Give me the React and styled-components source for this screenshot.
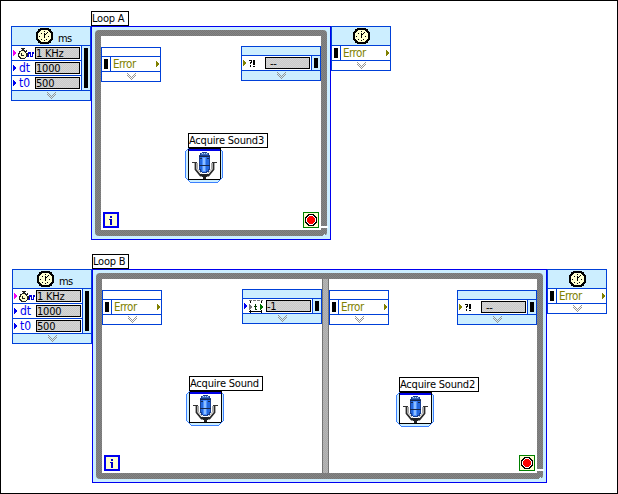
import React from "react";
import styled, { createGlobalStyle } from "styled-components";

const Global = createGlobalStyle`
  * { box-sizing: border-box; }
  body { margin: 0; background: #fff; }
`;

const BLUE = "#0040d8";
const WIRE = "#0000f0";
const PALE = "#cceeff";
const OLIVE = "#808000";

const Diagram = styled.main`
  position: relative;
  width: 618px;
  height: 494px;
  border: 1px solid #000;
  background: #fff;
  overflow: hidden;
  font: 11px/14px "DejaVu Sans Condensed", "DejaVu Sans", sans-serif;
  font-stretch: condensed;
  color: #000;
`;

const Place = styled.div`
  position: absolute;
  left: ${(p) => p.$x}px;
  top: ${(p) => p.$y}px;
`;

const LoopBox = styled.section`
  display: flex;
  width: ${(p) => p.$w}px;
  height: 214px;
  border: 1px solid ${WIRE};
  padding: 3px;
  background: ${PALE};
`;

const LoopFrame = styled.div`
  flex: 1;
  display: flex;
  padding: 6px;
  border-radius: 4px;
  background: repeating-conic-gradient(#777 0 25%, #858585 0 50%) 0 0 / 2px 2px;
`;

const Panel = styled.div`
  position: relative;
  flex: ${(p) => (p.$w ? `0 0 ${p.$w}px` : "1")};
  background: #fff;
`;

const Divider = styled.div`
  width: 7px;
  border: solid #737373;
  border-width: 0 1px;
  background: repeating-conic-gradient(#a9a9a9 0 25%, #b6b6b6 0 50%) 0 0 / 2px 2px;
`;

const Label = styled.div`
  width: ${(p) => p.$w}px;
  height: 15px;
  border: 1px solid #000;
  background: #fff;
  line-height: 13px;
  white-space: nowrap;
  letter-spacing: -0.2px;
`;

const Node = styled.div`
  display: flex;
  flex-direction: column;
  width: ${(p) => p.$w}px;
  border: 1px solid ${BLUE};
  background: ${(p) => (p.$fill ? PALE : "#fff")};
`;

const Header = styled.div`
  position: relative;
  display: flex;
  justify-content: center;
  height: ${(p) => (p.$tall ? 18 : 8)}px;
  padding-top: ${(p) => (p.$tall ? 1 : 0)}px;
  background: ${(p) => (p.$fill ? PALE : "#fff")};
`;

const HeaderIcon = styled.div`
  margin-right: 14px;
`;

const Unit = styled.span`
  position: absolute;
  left: 46px;
  top: 5px;
  letter-spacing: -0.6px;
`;

const Footer = styled.div`
  display: flex;
  justify-content: center;
  height: 9px;
  padding: 1px 0 0 1px;
`;

const Body = styled.div`
  display: flex;
  border: solid ${BLUE};
  border-width: 1px 0;
`;

const Rows = styled.div`
  flex: 1;
  display: flex;
  flex-direction: column;
  gap: 1px;
  background: ${BLUE};
`;

const Row = styled.div`
  display: flex;
  align-items: center;
  justify-content: space-between;
  height: 14px;
  padding: 0 1px;
  background: #fff;
`;

const Name = styled.div`
  flex: 1;
  display: flex;
  align-items: center;
  padding-left: ${(p) => p.$inset || 0}px;
  color: ${(p) => (p.$olive ? OLIVE : WIRE)};
  font-size: ${(p) => (p.$olive ? 11.5 : 12)}px;
  letter-spacing: ${(p) => (p.$olive ? -0.5 : 0)}px;
`;

const Field = styled.div`
  width: 45px;
  height: 12px;
  border: 1px solid #000;
  padding-left: ${(p) => (p.$inset ? 4 : 0)}px;
  line-height: 11px;
  letter-spacing: -0.2px;
  background: repeating-conic-gradient(#cacaca 0 25%, #d6d6d6 0 50%) 0 0 / 2px 2px;
`;

const Terminal = styled.div`
  display: flex;
  width: 9px;
  padding: 2px;
  border: 0 solid ${BLUE};
  border-left-width: ${(p) => (p.$left ? 0 : 1)}px;
  border-right-width: ${(p) => (p.$left ? 1 : 0)}px;
  background: ${(p) => (p.$fill ? PALE : "#fff")};
`;

const Bar = styled.i`
  width: 4px;
  background: #000;
`;

const Svg = styled.svg`
  display: block;
  flex: none;
  shape-rendering: crispEdges;
`;

function Pixels({ rows, colors }) {
  return (
    <Svg width={rows[0].length} height={rows.length}>
      {rows.flatMap((row, y) =>
        [...row].map((c, x) =>
          colors[c] ? <rect key={`${x}-${y}`} x={x} y={y} width="1" height="1" fill={colors[c]} /> : null
        )
      )}
    </Svg>
  );
}

const Chevron = () => (
  <Pixels
    colors={{ x: "#949494" }}
    rows={[
      "x.......x",
      ".x.....x.",
      "x.x...x.x",
      ".x.x.x.x.",
      "..x.x.x..",
      "...x.x...",
      "....x....",
    ]}
  />
);

const Clock = () => (
  <Pixels
    colors={{ x: "#000", o: "#ffffcf" }}
    rows={[
      "....xxxxxxxxx....",
      "..xxxxxxxxxxxxx..",
      "..xxxoooooooxxx..",
      ".xxxooooxooooxxx.",
      "xxxooooooooxooxxx",
      "xxoooxooxoxooooxx",
      "xxooooooxxoooooxx",
      "xxooooooxooooooxx",
      "xxoxooooxoooxooxx",
      "xxooooooxooooooxx",
      "xxoooooooooooooxx",
      "xxxooxooooxoooxxx",
      ".xxxooooxooooxxx.",
      "..xxxoooooooxxx..",
      "..xxxxxxxxxxxxx..",
      "....xxxxxxxxx....",
    ]}
  />
);

const Arrow = ({ color }) => (
  <Svg width="3" height="6">
    <path d="M0 0h1v6H0zM1 1h1v4H1zM2 2h1v2H2z" fill={color} />
  </Svg>
);

const Source = () => (
  <Pixels
    colors={{ x: "#222", o: "#ffffcf", b: "#0000d8" }}
    rows={[
      "...xxxx.........",
      "....xx..........",
      "...xxxx.x.......",
      ".xxoooxxx.......",
      ".xooooox..bbb.bb",
      "xxoxooooxxbbb.bb",
      "xooxooooxxb.b.b.",
      "xooxxxooxxb.b.b.",
      "xxooooooxbb.bbb.",
      ".xxoooox........",
      "..xxxxx.........",
    ]}
  />
);

const Dispatch = () => (
  <Pixels
    colors={{ x: "#000", g: "#777", e: "#007000", t: "#003800" }}
    rows={[
      "ggg.ggg.ggg.gg",
      ".x..........x.",
      ".x..........x.",
      "..............",
      "g.....t....e..",
      "gg....t....ee.",
      "ggg..ttt...eee",
      "ggg...t....eee",
      "gg....t....ee.",
      "g.....tt...e..",
      ".x..........x.",
      "xxxxxxxxxxxxx.",
      ".x..........x.",
    ]}
  />
);

const ErrorMark = () => (
  <Pixels
    colors={{ x: "#000" }}
    rows={[
      "xxx.xx",
      "..x.xx",
      ".xx.xx",
      ".x..xx",
      "....xx",
      ".x....",
      ".x..xx",
    ]}
  />
);

const Glyph = styled.span`
  display: flex;
`;

const Index = styled.div`
  display: flex;
  justify-content: center;
  width: 16px;
  height: 16px;
  border: 2px solid ${WIRE};
  background: #ffffd0;
`;

const Iteration = () => (
  <Index>
    <Svg width="12" height="12">
      <path d="M5 2h2v2H5zM4 5h3v6H5V6H4z" fill="#0000c8" />
    </Svg>
  </Index>
);

const StopBox = styled.div`
  width: 16px;
  height: 16px;
  border: 1px solid #008000;
  background: #ffffd0;
`;

const Stop = () => (
  <StopBox>
    <Svg width="14" height="14">
      <path d="M4 1h6v1h1v1h1v1h1v6h-1v1h-1v1h-1v1H4v-1H3v-1H2v-1H1V4h1V3h1V2h1z" fill="#000" />
      <path d="M5 2h4v1h1v1h1v1h1v4h-1v1h-1v1H9v1H5v-1H4v-1H3V9H2V5h1V4h1V3h1z" fill="#fff" />
      <path d="M5 3h4v1h1v1h1v4h-1v1H9v1H5v-1H4V9H3V5h1V4h1z" fill="#f00" />
    </Svg>
  </StopBox>
);

const Microphone = () => (
  <Svg width="38" height="35" viewBox="0 0 38 35">
    <path d="M3.5.5h31l3 3v26l-5 5h-27l-5-5v-26z" fill={PALE} stroke="#3c80ff" />
    <rect x="3" y="0" width="33" height="32" rx="2" fill="#000" />
    <rect x="4" y="1" width="31" height="30" fill="#fff" />
    <rect x="4" y="1" width="31" height="2" fill="#0000e8" />
    <g shapeRendering="auto">
      <path d="M10.5 14v7.5l5 6h8l5-6V14" fill="none" stroke="#2c2c2c" strokeWidth="1.8" />
      <path d="M12.5 15v6l4 4.5M26.500 15v6l-4 4.5" fill="none" stroke="#a8a8a8" strokeWidth="1" />
    </g>
    <path d="M7 14h5v1H7zM27 14h5v1h-5z" fill="#333" />
    <path d="M15 26h9v2h-2v1h-1v2h-3v-2h-1v-1h-2z" fill="#222" />
    <path d="M17 4h5v1h2v2h1v15h-1v2h-2v1h-5v-1h-2v-2h-1V7h1V5h2z" fill="#163d90" />
    <path d="M15 9h9v12h-1v2h-7v-2h-1z" fill="#2467dc" />
    <path d="M17 9h4v15h-4z" fill="#4d91ff" />
    <path d="M18 10h2v13h-2z" fill="#8fbfff" />
    <path d="M16 5h7v2h-7z" fill="#3f6fbd" />
    <path d="M17 5h1v1h-1zM19 5h1v1h-1zM21 5h1v1h-1z" fill="#b7d3ff" />
    <path d="M14 8h11v1H14zM14 17h11v1H14z" fill="#17284c" />
    <path d="M15 10h2v1h-2zM22 10h2v1h-2z" fill="#17284c" />
  </Svg>
);

const Corner = () => (
  <Svg width="8" height="10">
    <path d="M0 0h8v2H0z" fill="#fff" />
    <path d="M4 8h1v1h1v1H3V9h1z" fill={PALE} />
  </Svg>
);

function Config() {
  return (
    <Node $w={80} $fill>
      <Header $tall $fill>
        <HeaderIcon><Clock /></HeaderIcon>
        <Unit>ms</Unit>
      </Header>
      <Body>
        <Rows>
          <Row>
            <Arrow color="#f000f0" />
            <Glyph><Source /></Glyph>
            <Field>1 KHz</Field>
          </Row>
          <Row>
            <Arrow color={WIRE} />
            <Name $inset={3}>dt</Name>
            <Field>1000</Field>
          </Row>
          <Row>
            <Arrow color={WIRE} />
            <Name $inset={3}>t0</Name>
            <Field>500</Field>
          </Row>
        </Rows>
        <Terminal $fill><Bar /></Terminal>
      </Body>
      <Footer><Chevron /></Footer>
    </Node>
  );
}

function ErrorNode({ clock }) {
  return (
    <Node $w={60}>
      <Header $tall={clock} $fill={clock}>{clock && <Clock />}</Header>
      <Body>
        <Terminal $left><Bar /></Terminal>
        <Rows>
          <Row>
            <Name $olive $inset={1}>Error</Name>
            <Arrow color={OLIVE} />
          </Row>
        </Rows>
      </Body>
      <Footer><Chevron /></Footer>
    </Node>
  );
}

function ValueNode({ value, dispatch }) {
  return (
    <Node $w={80} $fill>
      <Header $fill />
      <Body>
        <Rows>
          <Row>
            <Arrow color={dispatch ? WIRE : OLIVE} />
            <Name $inset={dispatch ? 2 : 3}>{dispatch ? <Dispatch /> : <ErrorMark />}</Name>
            <Field $inset={!dispatch}>{value}</Field>
          </Row>
        </Rows>
        <Terminal $fill><Bar /></Terminal>
      </Body>
      <Footer><Chevron /></Footer>
    </Node>
  );
}

function Sound({ x, y, name, w }) {
  return (
    <>
      <Place $x={x - 3} $y={y + 15}><Microphone /></Place>
      <Place $x={x} $y={y}><Label $w={w}>{name}</Label></Place>
    </>
  );
}

export default function App() {
  return (
    <>
      <Global />
      <Diagram>
        <Place $x={90} $y={10}><Label $w={38}>Loop A</Label></Place>
        <Place $x={10} $y={25}><Config /></Place>
        <Place $x={90} $y={25}>
          <LoopBox $w={240}>
            <LoopFrame>
              <Panel>
                <Place $x={0} $y={11}><ErrorNode /></Place>
                <Place $x={140} $y={10}><ValueNode value="--" /></Place>
                <Sound x={87} y={97} w={80} name="Acquire Sound3" />
                <Place $x={2} $y={176}><Iteration /></Place>
                <Place $x={202} $y={176}><Stop /></Place>
                <Place $x={219} $y={190}><Corner /></Place>
              </Panel>
            </LoopFrame>
          </LoopBox>
        </Place>
        <Place $x={330} $y={25}><ErrorNode clock /></Place>

        <Place $x={91} $y={253}><Label $w={37}>Loop B</Label></Place>
        <Place $x={11} $y={268}><Config /></Place>
        <Place $x={91} $y={268}>
          <LoopBox $w={455}>
            <LoopFrame>
              <Panel $w={220}>
                <Place $x={0} $y={11}><ErrorNode /></Place>
                <Place $x={140} $y={10}><ValueNode value="-1" dispatch /></Place>
                <Sound x={87} y={97} w={74} name="Acquire Sound" />
                <Place $x={2} $y={176}><Iteration /></Place>
              </Panel>
              <Divider />
              <Panel>
                <Place $x={0} $y={11}><ErrorNode /></Place>
                <Place $x={128} $y={11}><ValueNode value="--" /></Place>
                <Sound x={70} y={98} w={80} name="Acquire Sound2" />
                <Place $x={190} $y={176}><Stop /></Place>
                <Place $x={207} $y={190}><Corner /></Place>
              </Panel>
            </LoopFrame>
          </LoopBox>
        </Place>
        <Place $x={546} $y={268}><ErrorNode clock /></Place>
      </Diagram>
    </>
  );
}
